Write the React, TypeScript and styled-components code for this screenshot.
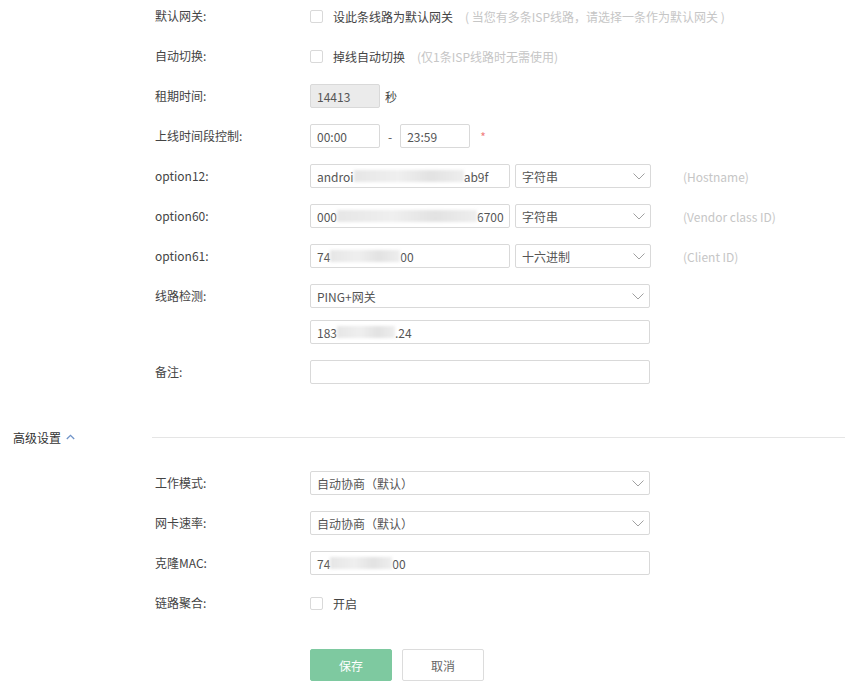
import styled, { createGlobalStyle } from "styled-components";
import { ReactNode } from "react";

const Global = createGlobalStyle`
  html, body { margin: 0; padding: 0; background: #fff; }
  body {
    font-family: "Noto Sans CJK SC", "Noto Sans", "Liberation Sans", sans-serif;
    font-size: 12px;
    color: #333;
  }
`;

const Page = styled.div`
  width: 845px;
  height: 691px;
  padding-top: 4px;
  box-sizing: border-box;
  overflow: hidden;
`;

const Form = styled.div`
  display: flex;
  flex-direction: column;
  gap: 16px;
  padding-left: 155px;
`;

const Row = styled.div`
  display: flex;
  align-items: flex-start;
`;

const Label = styled.div`
  width: 155px;
  flex-shrink: 0;
  height: 24px;
  line-height: 24px;
  color: #444;
  font-size: 12px;
`;

const Controls = styled.div<{ $gap?: number }>`
  display: flex;
  flex-direction: column;
  gap: ${(p) => p.$gap ?? 0}px;
`;

const Line = styled.div`
  display: flex;
  align-items: center;
  height: 24px;
`;

const Check = styled.span`
  width: 13px;
  height: 13px;
  box-sizing: border-box;
  border: 1px solid #d9d9d9;
  border-radius: 2px;
  background: #fff;
  margin-right: 10px;
`;

const Text = styled.span`
  color: #444;
`;

const Hint = styled.span<{ $ml?: number }>`
  color: #c6c6c6;
  margin-left: ${(p) => p.$ml ?? 12}px;
`;

const Box = styled.div<{ $w: number; $disabled?: boolean }>`
  width: ${(p) => p.$w}px;
  height: 24px;
  box-sizing: border-box;
  border: 1px solid #d9d9d9;
  border-radius: 2px;
  background: ${(p) => (p.$disabled ? "#ebebeb" : "#fff")};
  padding: 0 6px;
  display: flex;
  align-items: center;
  color: #555;
  white-space: nowrap;
  overflow: hidden;
  font-size: 12px;
`;

const Blur = styled.span<{ $w: number }>`
  display: inline-block;
  width: ${(p) => p.$w}px;
  height: 12px;
  background: linear-gradient(90deg, #e6e6e6, #efefef 40%, #e2e2e2 70%, #eeeeee);
  filter: blur(1.5px);
  flex-shrink: 0;
`;

const SelectBox = styled(Box)`
  justify-content: space-between;
  margin-left: ${(p) => (p.$w < 300 ? 5 : 0)}px;
  padding-right: 5px;
`;

const Dash = styled.span`
  margin: 0 8px;
  color: #555;
`;

const Star = styled.span`
  color: #f08080;
  margin-left: 10px;
`;

const Unit = styled.span`
  margin-left: 5px;
  color: #444;
`;

const Section = styled.div`
  display: flex;
  align-items: center;
  height: 24px;
  margin: 41px 0 22px;
`;

const SectionTitle = styled.div`
  width: 152px;
  flex-shrink: 0;
  padding-left: 13px;
  box-sizing: border-box;
  display: flex;
  align-items: center;
  gap: 5px;
  color: #333;
  font-size: 12px;
`;

const Rule = styled.div`
  flex: 1;
  height: 1px;
  background: #e5e5e5;
`;

const Buttons = styled.div`
  display: flex;
  gap: 10px;
  padding-left: 310px;
  margin-top: 34px;
`;

const Button = styled.button<{ $primary?: boolean }>`
  width: 82px;
  height: 32px;
  box-sizing: border-box;
  border-radius: 2px;
  font: inherit;
  font-size: 12px;
  border: 1px solid ${(p) => (p.$primary ? "#7ec9a0" : "#dcdcdc")};
  background: ${(p) => (p.$primary ? "#7ec9a0" : "#fff")};
  color: ${(p) => (p.$primary ? "#fff" : "#666")};
  cursor: pointer;
`;

function Chevron() {
  return (
    <svg width="12" height="7" viewBox="0 0 12 7" fill="none">
      <path d="M0.5 0.5 L6 6 L11.5 0.5" stroke="#a0a0a0" strokeWidth="1" />
    </svg>
  );
}

function Select({ w, children }: { w: number; children: ReactNode }) {
  return (
    <SelectBox $w={w}>
      <span>{children}</span>
      <Chevron />
    </SelectBox>
  );
}

function Field({ label, children, gap }: { label: string; children: ReactNode; gap?: number }) {
  return (
    <Row>
      <Label>{label}</Label>
      <Controls $gap={gap}>{children}</Controls>
    </Row>
  );
}

export default function App() {
  return (
    <Page>
      <Global />
      <Form>
        <Field label="默认网关:">
          <Line>
            <Check />
            <Text>设此条线路为默认网关</Text>
            <Hint>( 当您有多条ISP线路，请选择一条作为默认网关 )</Hint>
          </Line>
        </Field>
        <Field label="自动切换:">
          <Line>
            <Check />
            <Text>掉线自动切换</Text>
            <Hint>(仅1条ISP线路时无需使用)</Hint>
          </Line>
        </Field>
        <Field label="租期时间:">
          <Line>
            <Box $w={70} $disabled>14413</Box>
            <Unit>秒</Unit>
          </Line>
        </Field>
        <Field label="上线时间段控制:">
          <Line>
            <Box $w={70}>00:00</Box>
            <Dash>-</Dash>
            <Box $w={70}>23:59</Box>
            <Star>*</Star>
          </Line>
        </Field>
        <Field label="option12:">
          <Line>
            <Box $w={200}>androi<Blur $w={110} />ab9f</Box>
            <Select w={136}>字符串</Select>
            <Hint $ml={32}>(Hostname)</Hint>
          </Line>
        </Field>
        <Field label="option60:">
          <Line>
            <Box $w={200}>000<Blur $w={140} />6700</Box>
            <Select w={136}>字符串</Select>
            <Hint $ml={32}>(Vendor class ID)</Hint>
          </Line>
        </Field>
        <Field label="option61:">
          <Line>
            <Box $w={200}>74<Blur $w={70} />00</Box>
            <Select w={136}>十六进制</Select>
            <Hint $ml={32}>(Client ID)</Hint>
          </Line>
        </Field>
        <Field label="线路检测:" gap={12}>
          <Select w={340}>PING+网关</Select>
          <Box $w={340}>183<Blur $w={58} />.24</Box>
        </Field>
        <Field label="备注:">
          <Box $w={340} />
        </Field>
      </Form>

      <Section>
        <SectionTitle>
          高级设置
          <svg width="9" height="6" viewBox="0 0 9 6" fill="none">
            <path d="M0.8 5 L4.5 1.3 L8.2 5" stroke="#6f93c8" strokeWidth="1.3" />
          </svg>
        </SectionTitle>
        <Rule />
      </Section>

      <Form>
        <Field label="工作模式:">
          <Select w={340}>自动协商（默认）</Select>
        </Field>
        <Field label="网卡速率:">
          <Select w={340}>自动协商（默认）</Select>
        </Field>
        <Field label="克隆MAC:">
          <Box $w={340}>74<Blur $w={62} />00</Box>
        </Field>
        <Field label="链路聚合:">
          <Line>
            <Check />
            <Text>开启</Text>
          </Line>
        </Field>
      </Form>

      <Buttons>
        <Button $primary>保存</Button>
        <Button>取消</Button>
      </Buttons>
    </Page>
  );
}
